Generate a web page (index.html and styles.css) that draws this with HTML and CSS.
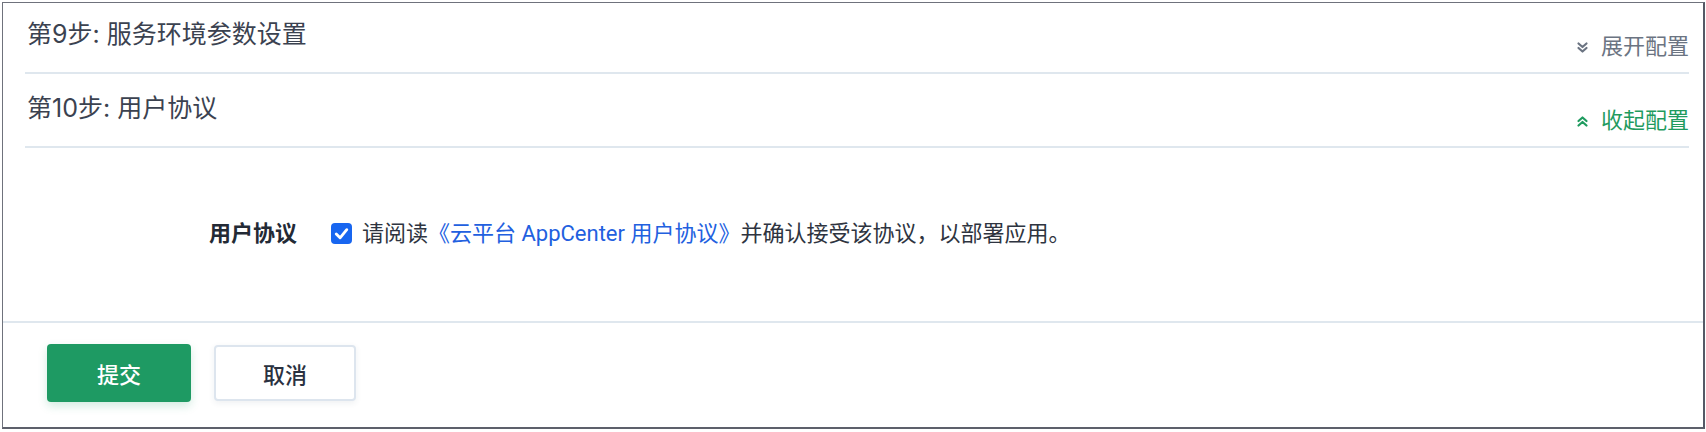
FILE: index.html
```html
<!DOCTYPE html>
<html lang="zh-CN">
<head>
<meta charset="utf-8">
<title>用户协议</title>
<link rel="stylesheet" href="styles.css">
</head>
<body>
<div class="frame">
  <div class="step step-first">
    <div class="step-title">第9步: 服务环境参数设置</div>
    <div class="toggle toggle-closed">
      <svg class="chev" viewBox="0 0 13 13" width="13" height="13"><polyline points="2.5,2.5 6.5,6 10.5,2.5"/><polyline points="2.5,7 6.5,10.5 10.5,7"/></svg>
      <span>展开配置</span>
    </div>
  </div>
  <div class="step step-second">
    <div class="step-title">第10步: 用户协议</div>
    <div class="toggle toggle-open">
      <svg class="chev" viewBox="0 0 13 13" width="13" height="13"><polyline points="2.5,6 6.5,2.5 10.5,6"/><polyline points="2.5,10.5 6.5,7 10.5,10.5"/></svg>
      <span>收起配置</span>
    </div>
  </div>
  <div class="form-body">
    <div class="form-row">
      <div class="form-label">用户协议</div>
      <span class="checkbox">
        <svg viewBox="0 0 22 22" width="22" height="22"><polyline points="5.5,11.5 9.5,15.5 16.5,7"/></svg>
      </span>
      <div class="form-text">请阅读<a class="link" href="#">《云平台 AppCenter 用户协议》</a>并确认接受该协议，以部署应用。</div>
    </div>
  </div>
  <div class="footer">
    <button class="btn btn-primary">提交</button>
    <button class="btn btn-default">取消</button>
  </div>
</div>
</body>
</html>
```
FILE: styles.css
```css
* { box-sizing: border-box; }
html, body { margin: 0; padding: 0; background: #ffffff; }
body {
  font-family: Roboto, "Noto Sans CJK SC", "Noto Sans", sans-serif;
  color: #2e3440;
}
.frame {
  margin: 2px 1px 0 2px;
  height: 427px;
  border: 1px solid #6f727c;
  border-right: 2px solid #555966;
  border-bottom: 2px solid #5d606b;
  display: flex;
  flex-direction: column;
}
.step {
  margin: 0 14px 0 22px;
  display: flex;
  justify-content: space-between;
  border-bottom: 2px solid #dfe7ee;
}
.step-first { height: 71px; padding-top: 13px; }
.step-second { height: 74px; padding-top: 16px; }
.step-title {
  align-self: flex-start;
  font-family: Inter, "Noto Sans CJK SC", sans-serif;
  font-size: 25px;
  line-height: 36px;
  color: #3b4250;
  padding-left: 2px;
}
.toggle {
  align-self: flex-end;
  display: flex;
  align-items: center;
  gap: 12px;
  font-size: 22px;
  line-height: 30px;
  padding-bottom: 10px;
}
.toggle-closed { color: #6b7482; }
.toggle-open { color: #1f9b5f; }
.chev { display: block; fill: none; stroke: currentColor; stroke-width: 2.2; stroke-linecap: round; stroke-linejoin: round; }
.form-body {
  height: 173px;
  display: flex;
  align-items: center;
  padding-bottom: 2px;
}
.form-row {
  display: flex;
  align-items: center;
  padding-left: 194px;
}
.form-label {
  width: 100px;
  text-align: right;
  font-size: 22px;
  font-weight: 700;
  color: #232a35;
  line-height: 30px;
}
.checkbox {
  margin-left: 34px;
  width: 21px;
  height: 21px;
  border-radius: 4px;
  background: #1866f0;
  display: flex;
  align-items: center;
  justify-content: center;
}
.checkbox svg { width: 21px; height: 21px; fill: none; stroke: #ffffff; stroke-width: 3; stroke-linecap: round; stroke-linejoin: round; }
.form-text {
  margin-left: 10px;
  font-size: 22px;
  line-height: 30px;
  color: #2e3440;
}
.link { color: #2260df; text-decoration: none; }
.footer {
  flex: 1;
  border-top: 2px solid #dfe7ee;
  display: flex;
  align-items: flex-start;
  gap: 23px;
  padding: 21px 0 0 44px;
}
.btn {
  font-family: inherit;
  font-size: 22px;
  border-radius: 4px;
  cursor: pointer;
  margin: 0;
}
.btn-primary {
  width: 144px;
  height: 58px;
  background: #1e9a63;
  color: #ffffff;
  border: none;
  font-weight: 500;
  box-shadow: 0 4px 10px rgba(30, 154, 99, 0.2);
}
.btn-default {
  width: 142px;
  height: 56px;
  margin-top: 1px;
  background: #ffffff;
  color: #2a3140;
  border: 2px solid #dde5ee;
  font-weight: 500;
  box-shadow: 0 2px 6px rgba(40, 60, 90, 0.08);
}
```
